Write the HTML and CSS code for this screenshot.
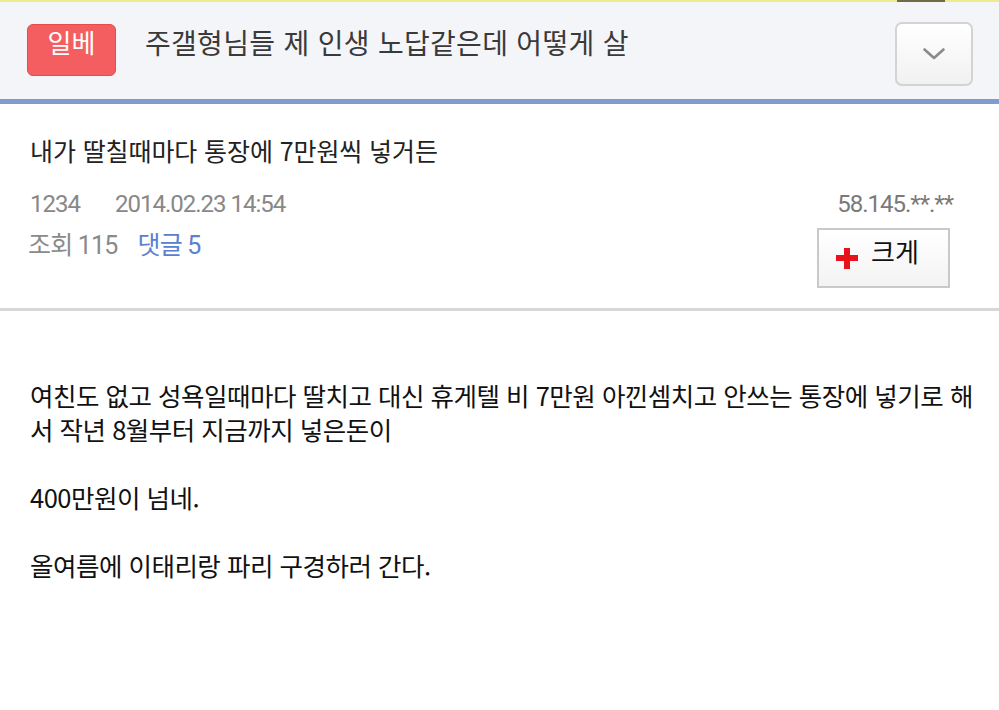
FILE: index.html
```html
<!DOCTYPE html>
<html lang="ko">
<head>
<meta charset="utf-8">
<title>일베</title>
<link rel="stylesheet" href="styles.css">
</head>
<body>
<div class="topbar"><span class="topbar-mark"></span></div>
<header class="header">
  <div class="badge">일베</div>
  <h1 class="board-title">주갤형님들 제 인생 노답같은데 어떻게 살</h1>
  <button class="drop-btn" type="button" aria-label="더보기">
    <svg width="24" height="14" viewBox="0 0 24 14"><path d="M2.5 2.5 L12 11 L21.5 2.5" fill="none" stroke="#8a8a8a" stroke-width="2.6" stroke-linecap="round" stroke-linejoin="round"/></svg>
  </button>
</header>
<section class="post-head">
  <h2 class="post-title">내가 딸칠때마다 통장에 7만원씩 넣거든</h2>
  <div class="meta-row">
    <div class="meta-left"><span class="author">1234</span><span class="date">2014.02.23 14:54</span></div>
    <span class="ip">58.145.**.**</span>
  </div>
  <div class="stat-row">
    <div class="stats"><span class="views">조회 115</span><span class="comments">댓글 5</span></div>
    <button class="zoom-btn" type="button"><span class="plus"></span><span class="zoom-label">크게</span></button>
  </div>
</section>
<article class="post-body">
  <p>여친도 없고 성욕일때마다 딸치고 대신 휴게텔 비 7만원 아낀셈치고 안쓰는 통장에 넣기로 해서 작년 8월부터 지금까지 넣은돈이<br><br>400만원이 넘네.<br><br>올여름에 이태리랑 파리 구경하러 간다.</p>
</article>
</body>
</html>
```
FILE: styles.css
```css
html, body {
  margin: 0;
  padding: 0;
  background: #ffffff;
}
body {
  width: 999px;
  font-family: Roboto, "Noto Sans CJK KR", sans-serif;
  color: #111;
}
.topbar {
  height: 2px;
  background: #efeb8e;
  display: flex;
  justify-content: flex-end;
}
.topbar-mark {
  width: 48px;
  height: 2px;
  margin-right: 54px;
  background: #6e6c45;
}
.header {
  height: 102px;
  box-sizing: border-box;
  padding: 20px 26px 0 27px;
  background: #f4f5f8;
  border-bottom: 5px solid #7f9bd0;
  display: flex;
  align-items: flex-start;
}
.badge {
  margin-top: 2px;
  width: 89px;
  height: 52px;
  box-sizing: border-box;
  padding-top: 4px;
  border: 1px solid #e44c4e;
  border-radius: 6px;
  background: #f45e60;
  color: #fff;
  font-family: "Noto Sans CJK KR", sans-serif;
  font-size: 26px;
  line-height: 26px;
  text-align: center;
}
.board-title {
  margin: 6px 0 0 29px;
  flex: 1;
  font-family: "Noto Sans CJK KR", sans-serif;
  font-weight: normal;
  font-size: 28px;
  line-height: 28px;
  letter-spacing: 0.3px;
  color: #3a3a3a;
}
.drop-btn {
  width: 78px;
  height: 64px;
  box-sizing: border-box;
  border: 2px solid #d3d3d3;
  border-radius: 7px;
  background: linear-gradient(#ffffff, #f1f1f1);
  padding: 0;
  display: flex;
  align-items: center;
  justify-content: center;
}
.post-head {
  padding: 34px 46px 20px 30px;
  border-bottom: 3px solid #d7d7d7;
}
.post-title {
  margin: 0;
  font-family: "Noto Sans CJK KR", sans-serif;
  font-weight: normal;
  font-size: 25px;
  line-height: 25px;
  letter-spacing: -0.1px;
  color: #222;
}
.meta-row {
  margin-top: 29px;
  display: flex;
  justify-content: space-between;
  font-size: 24px;
  line-height: 24px;
  letter-spacing: -1px;
  color: #888;
}
.date {
  margin-left: 35px;
}
.ip {
  color: #7a7a7a;
}
.stat-row {
  margin-top: 12px;
  display: flex;
  justify-content: space-between;
  align-items: flex-start;
}
.stats {
  margin-top: 5px;
  margin-left: -2px;
  font-size: 25px;
  line-height: 25px;
  letter-spacing: -0.8px;
}
.views {
  color: #8a8a8a;
}
.comments {
  margin-left: 20px;
  color: #5b80d2;
}
.zoom-btn {
  margin-right: 3px;
  width: 133px;
  height: 60px;
  box-sizing: border-box;
  border: 2px solid #c9c9c9;
  background: linear-gradient(#ffffff, #f3f3f3);
  padding: 0 0 0 17px;
  display: flex;
  align-items: center;
  font-family: "Noto Sans CJK KR", sans-serif;
}
.plus {
  position: relative;
  width: 22px;
  height: 21px;
  margin-top: 0;
}
.plus::before,
.plus::after {
  content: "";
  position: absolute;
  background: #e8121c;
}
.plus::before {
  left: 0;
  right: 0;
  top: 7px;
  height: 6px;
}
.plus::after {
  top: 0;
  bottom: 0;
  left: 8px;
  width: 6px;
}
.zoom-label {
  margin-left: 13px;
  margin-top: -14px;
  font-size: 26px;
  line-height: 26px;
  color: #111;
}
.post-body {
  padding: 67px 20px 0 30px;
}
.post-body p {
  margin: 0;
  font-family: "Noto Sans CJK KR", sans-serif;
  font-size: 25.5px;
  line-height: 34px;
  letter-spacing: -0.5px;
  color: #111;
}
```
